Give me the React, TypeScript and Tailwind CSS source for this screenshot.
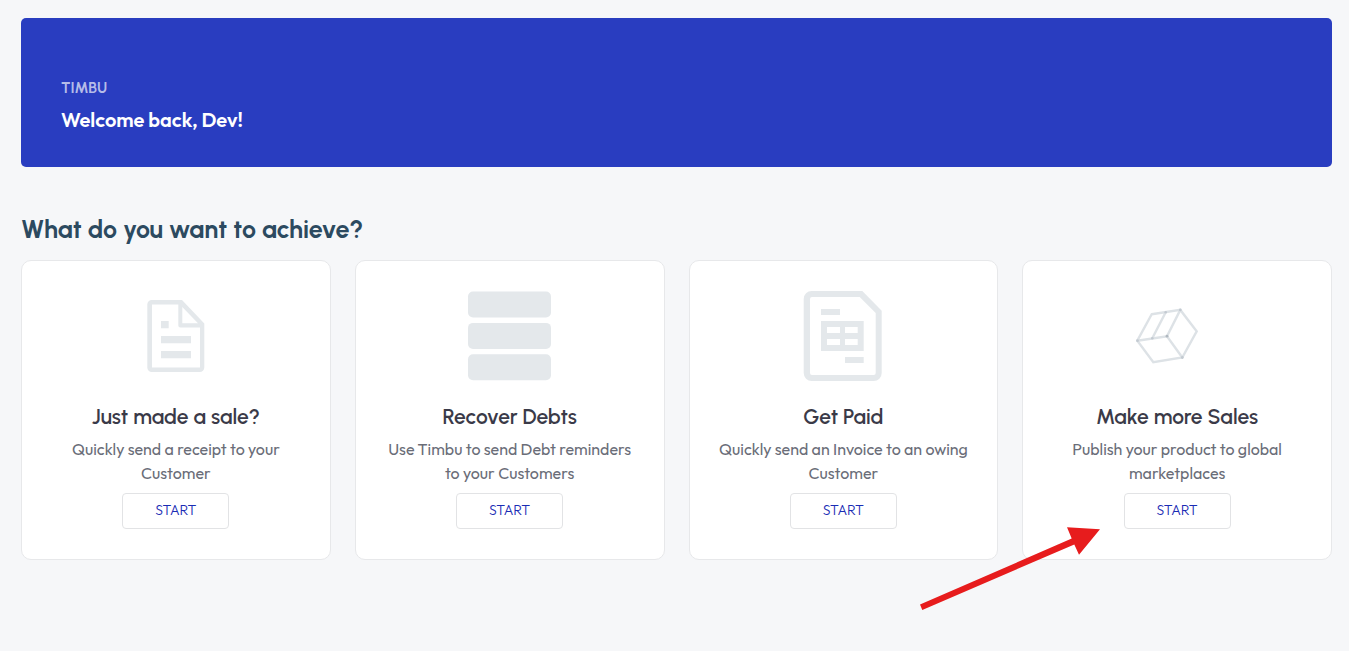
import type { ReactNode } from 'react';

function ReceiptIcon() {
  return (
    <svg viewBox="0 0 90 90" className="size-[90px]" fill="#e4e8eb" aria-hidden="true">
      <path
        fillRule="evenodd"
        d="M20.8 9H51L73.3 32.5V76.5a4.5 4.5 0 0 1-4.5 4.5h-48a4.5 4.5 0 0 1-4.5-4.5V13.5a4.5 4.5 0 0 1 4.5-4.5ZM21 13.5V76.5H69V36.5H49.3a2 2 0 0 1-2-2V13.5ZM51.3 16V32.3H67Z"
      />
      <path d="M30 30h7.7v7.3H30ZM30 45h30v7.3H30ZM30 60h30v7.3H30Z" />
    </svg>
  );
}

function StackIcon() {
  return (
    <svg viewBox="0 0 90 90" className="size-[90px]" fill="#e4e8eb" aria-hidden="true">
      <rect x="3" y="0.5" width="83" height="26" rx="5" />
      <rect x="3" y="31.9" width="83" height="26" rx="5" />
      <rect x="3" y="63.2" width="83" height="26" rx="5" />
    </svg>
  );
}

function InvoiceIcon() {
  return (
    <svg viewBox="0 0 90 90" className="size-[90px]" fill="#e4e8eb" aria-hidden="true">
      <path
        fillRule="evenodd"
        d="M13.7 0H64.3L83.7 19.7V82a8 8 0 0 1-8 8h-62a8 8 0 0 1-8-8V8a8 8 0 0 1 8-8ZM14 6a2 2 0 0 0-2 2V82a2 2 0 0 0 2 2h61.7a2 2 0 0 0 2-2V22L61.7 6Z"
      />
      <path
        fillRule="evenodd"
        d="M23 18h19v6H23ZM47 66h18.7v6H47ZM23 30h42.7v30H23ZM29 36v6h13v-6ZM47 36v6h12.7v-6ZM29 48v6h13v-6ZM47 48v6h12.7v-6Z"
      />
    </svg>
  );
}

function BoxIcon() {
  return (
    <svg viewBox="0 0 90 90" className="size-[90px]" fill="none" aria-hidden="true">
      <path
        stroke="#dde2e6"
        strokeWidth="2.4"
        d="M19.7 23.3 48.3 18.9 64.7 40.3 50.3 66.5 21.3 71.3 5.3 49.7ZM5.3 49.7 35 45.2 50.3 66.5M35 45.2 48.3 18.9M33.7 21.2 20.3 47.2"
      />
      <g fill="#c3cad1">
        <circle cx="48.3" cy="18.9" r="1.4" />
        <circle cx="33.7" cy="21.2" r="1.3" />
        <circle cx="5.5" cy="49.7" r="1.4" />
        <circle cx="20.3" cy="47.3" r="1.3" />
        <circle cx="35" cy="45.2" r="1.4" fill="#b0b8c0" />
        <circle cx="50.3" cy="66.5" r="1.4" />
      </g>
    </svg>
  );
}

function Arrow() {
  return (
    <svg
      viewBox="0 0 182 86"
      className="pointer-events-none absolute -bottom-[53px] -left-[103px] h-[86px] w-[182px]"
      fill="#e71c1d"
      aria-hidden="true"
    >
      <path d="M0 78.6 151.7 12.6 147 1.2 180 3.2 159 28.7 154.3 18.4 2.3 84Z" />
    </svg>
  );
}

type Goal = { title: string; text: string; icon: ReactNode; highlighted?: boolean };

const goals: Goal[] = [
  { title: 'Just made a sale?', text: 'Quickly send a receipt to your Customer', icon: <ReceiptIcon /> },
  { title: 'Recover Debts', text: 'Use Timbu to send Debt reminders to your Customers', icon: <StackIcon /> },
  { title: 'Get Paid', text: 'Quickly send an Invoice to an owing Customer', icon: <InvoiceIcon /> },
  { title: 'Make more Sales', text: 'Publish your product to global marketplaces', icon: <BoxIcon />, highlighted: true },
];

function GoalCard({ title, text, icon, highlighted }: Goal) {
  return (
    <article className="relative flex flex-col items-center rounded-[10px] border border-[#e7e8ea] bg-white px-6 py-[30px] text-center">
      {icon}
      <h3 className="mt-6 font-['Urbanist','Outfit',sans-serif] text-[21px] leading-6 font-semibold text-[#3a3a48]">
        {title}
      </h3>
      <p className="mt-2 text-base leading-6 text-[#6a6d78]">{text}</p>
      <button
        type="button"
        className="mt-2 h-9 w-[107px] rounded border border-[#e2e3e5] bg-white pb-0.5 text-sm font-light text-[#1a2cb4]"
      >
        START
      </button>
      {highlighted && <Arrow />}
    </article>
  );
}

export default function App() {
  return (
    <main className="min-h-screen bg-[#f6f7f9] pt-[18px] pr-[17px] pb-10 pl-[21px] font-['Outfit',sans-serif]">
      <header className="rounded-[5px] bg-[#293dc0] px-10 pt-[58px] pb-[33px]">
        <p className="font-['Urbanist','Outfit',sans-serif] text-[15px] leading-6 font-bold text-[#b5bce8]">TIMBU</p>
        <h1 className="mt-1.5 text-xl leading-7 font-semibold text-white">Welcome back, Dev!</h1>
      </header>
      <h2 className="mt-11 font-['Urbanist','Outfit',sans-serif] text-[25px] leading-9 font-bold text-[#2c4a60]">
        What do you want to achieve?
      </h2>
      <section className="mt-[13px] grid grid-cols-4 gap-6">
        {goals.map((goal) => (
          <GoalCard key={goal.title} {...goal} />
        ))}
      </section>
    </main>
  );
}
